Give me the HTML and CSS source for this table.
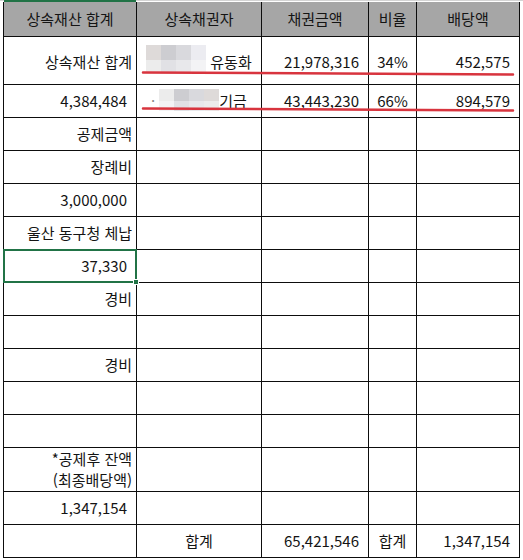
FILE: index.html
```html
<!DOCTYPE html>
<html lang="ko">
<head>
    <meta charset="UTF-8">
    <meta name="viewport" content="width=device-width, initial-scale=1.0">
    <title>배당표</title>
    <link rel="stylesheet" href="styles.css">
</head>
<body>
    <div class="sheet">
        <div class="grid">
            <div class="cell head col-a">상속재산 합계</div>
            <div class="cell head">상속채권자</div>
            <div class="cell head">채권금액</div>
            <div class="cell head">비율</div>
            <div class="cell head">배당액</div>

            <div class="cell text tall">상속재산 합계</div>
            <div class="cell mid tall">
                <span class="blur">
                    <i class="b1"></i><i class="b2"></i><i class="b3"></i><i class="b4"></i>
                    <i class="b5"></i><i class="b6"></i><i class="b7"></i><i class="b8"></i>
                </span>유동화
            </div>
            <div class="cell num tall">21,978,316</div>
            <div class="cell mid tall">34%</div>
            <div class="cell num tall">452,575</div>

            <div class="cell num">4,384,484</div>
            <div class="cell mid">
                <span class="dot">·</span>
                <span class="blur small">
                    <i class="b5"></i><i class="b2"></i><i class="b3"></i><i class="b1"></i>
                    <i class="b8"></i><i class="b6"></i><i class="b7"></i><i class="b5"></i>
                </span>기금
            </div>
            <div class="cell num">43,443,230</div>
            <div class="cell mid">66%</div>
            <div class="cell num">894,579</div>

            <div class="cell text">공제금액</div>
            <div class="cell"></div><div class="cell"></div><div class="cell"></div><div class="cell"></div>

            <div class="cell text">장례비</div>
            <div class="cell"></div><div class="cell"></div><div class="cell"></div><div class="cell"></div>

            <div class="cell num">3,000,000</div>
            <div class="cell"></div><div class="cell"></div><div class="cell"></div><div class="cell"></div>

            <div class="cell text">울산 동구청 체납</div>
            <div class="cell"></div><div class="cell"></div><div class="cell"></div><div class="cell"></div>

            <div class="cell num selected">37,330<span class="handle"></span></div>
            <div class="cell"></div><div class="cell"></div><div class="cell"></div><div class="cell"></div>

            <div class="cell text">경비</div>
            <div class="cell"></div><div class="cell"></div><div class="cell"></div><div class="cell"></div>

            <div class="cell"></div>
            <div class="cell"></div><div class="cell"></div><div class="cell"></div><div class="cell"></div>

            <div class="cell text">경비</div>
            <div class="cell"></div><div class="cell"></div><div class="cell"></div><div class="cell"></div>

            <div class="cell"></div>
            <div class="cell"></div><div class="cell"></div><div class="cell"></div><div class="cell"></div>

            <div class="cell"></div>
            <div class="cell"></div><div class="cell"></div><div class="cell"></div><div class="cell"></div>

            <div class="cell text two-line">*공제후 잔액<br>(최종배당액)</div>
            <div class="cell"></div><div class="cell"></div><div class="cell"></div><div class="cell"></div>

            <div class="cell num">1,347,154</div>
            <div class="cell"></div><div class="cell"></div><div class="cell"></div><div class="cell"></div>

            <div class="cell"></div>
            <div class="cell mid">합계</div>
            <div class="cell num">65,421,546</div>
            <div class="cell mid">합계</div>
            <div class="cell num">1,347,154</div>
        </div>

        <!-- hand drawn red underlines -->
        <svg class="marks" width="523" height="560" viewBox="0 0 523 560">
            <path d="M143 72.5 L513 74.5" stroke="#d8343e" stroke-width="2.5" stroke-linecap="round" fill="none"/>
            <path d="M143 108.5 L513 110.5" stroke="#d8343e" stroke-width="2.5" stroke-linecap="round" fill="none"/>
        </svg>
    </div>
</body>
</html>
```

FILE: styles.css
```css
* {
    margin: 0;
    padding: 0;
    box-sizing: border-box;
}

body {
    background: white;
    font-family: "Noto Sans CJK KR", "Noto Sans", sans-serif;
    font-size: 15px;
    color: #141414;
}

.sheet {
    position: relative;
    width: 523px;
    height: 560px;
    padding: 2px 0 0 3px;
    overflow: hidden;
    border-top: 0;
    background: linear-gradient(#d4d4d4, #d4d4d4) 0 0 / 100% 1px no-repeat, white;
}

.grid {
    display: grid;
    grid-template-columns: 132px 124px 106px 47px 102px;
    grid-template-rows: 34px 47px repeat(11, 32px) 43px 32px 32px;
    gap: 1px;
    padding: 0 1px 1px 1px;
    width: 517px;
    background: #0d0d0d;
}

.cell {
    position: relative;
    background: white;
    display: flex;
    align-items: center;
    padding: 0 4px 2px;
    white-space: nowrap;
}

.cell.tall {
    padding-bottom: 0;
    padding-top: 2px;
}

.head {
    background: #a6a6a6;
    justify-content: center;
    color: #141414;
}

.col-a {
    box-shadow: 0 -2px 0 #217346;
}

.text {
    justify-content: flex-end;
}

.two-line {
    text-align: right;
    line-height: 21px;
    padding-top: 1px;
}

.num {
    justify-content: flex-end;
    padding-right: 9px;
}

.mid {
    justify-content: center;
}

.selected {
    outline: 2px solid #217346;
    outline-offset: -1px;
    z-index: 2;
}

.handle {
    position: absolute;
    right: -3px;
    bottom: -3px;
    width: 6px;
    height: 6px;
    background: #217346;
    border: 1px solid white;
}

.blur {
    display: inline-grid;
    grid-template-columns: repeat(4, 15px);
    grid-template-rows: 15px 12px;
    margin-right: 4px;
    margin-top: -6px;
}

.blur.small {
    grid-template-rows: 12px 10px;
    margin-right: 0;
    margin-top: 0;
}

.blur i {
    display: block;
}

.b1 { background: #dedad9; }
.b2 { background: #cdcdd1; }
.b3 { background: #d9d9dd; }
.b4 { background: #ececf1; }
.b5 { background: #ececec; }
.b6 { background: #e1e1e5; }
.b7 { background: #e8e8eb; }
.b8 { background: #f3f3f5; }

.dot {
    color: #888;
    margin-right: 4px;
}

.marks {
    position: absolute;
    left: 0;
    top: 0;
    pointer-events: none;
}
```
